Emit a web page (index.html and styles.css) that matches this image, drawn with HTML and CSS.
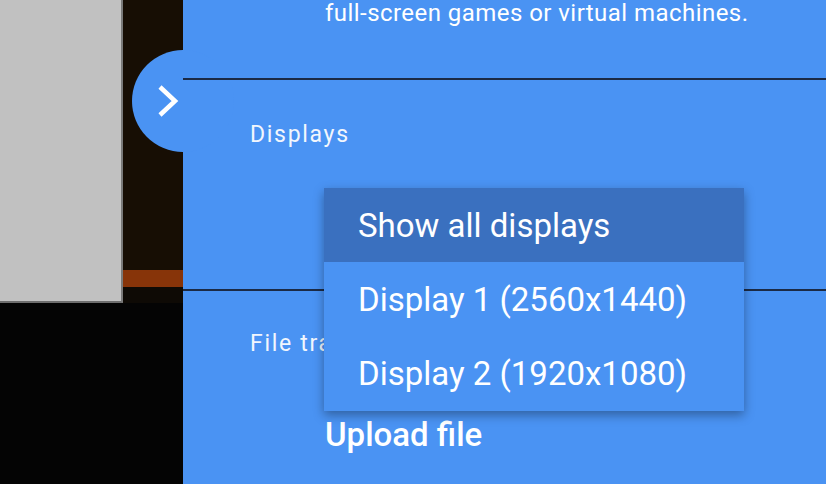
FILE: index.html
```html
<!DOCTYPE html>
<html>
<head>
<meta charset="utf-8">
<link rel="stylesheet" href="styles.css">
</head>
<body>
<div class="desktop">
  <div class="desk-top">
    <div class="window"></div>
    <div class="strip">
      <div class="strip-dark"></div>
      <div class="strip-orange"></div>
      <div class="strip-bottom"></div>
    </div>
  </div>
</div>
<div class="panel">
  <button class="toggle" aria-label="Close">
    <svg width="30" height="40" viewBox="0 0 30 40"><polyline points="4,5 19,19 4,33" fill="none" stroke="#fff" stroke-width="4.5"/></svg>
  </button>
  <div class="desc">full-screen games or virtual machines.</div>
  <div class="divider"></div>
  <div class="section section-displays">
    <div class="label">Displays</div>
  </div>
  <div class="divider"></div>
  <div class="section section-files">
    <div class="label">File transfer</div>
    <div class="action">Upload file</div>
  </div>
  <div class="menu">
    <div class="item selected">Show all displays</div>
    <div class="item">Display 1 (2560x1440)</div>
    <div class="item last">Display 2 (1920x1080)</div>
  </div>
</div>
</body>
</html>
```
FILE: styles.css
```css
html, body {
  margin: 0;
  padding: 0;
  width: 826px;
  height: 484px;
  overflow: hidden;
  background: #030303;
}
body {
  display: flex;
  font-family: Roboto, "Liberation Sans", sans-serif;
}
.desktop {
  width: 183px;
  flex: none;
  background: #040404;
}
.desk-top {
  display: flex;
  height: 303px;
}
.window {
  width: 123px;
  background: #c1c1c1;
  border-right: 2px solid #7a7a7a;
  border-bottom: 2px solid #6e6e6e;
  box-sizing: border-box;
  height: 303px;
}
.strip {
  flex: 1;
  display: flex;
  flex-direction: column;
}
.strip-dark {
  height: 270px;
  background: #170e04;
}
.strip-orange {
  height: 17px;
  background: #873409;
}
.strip-bottom {
  flex: 1;
  background: #0e0a05;
}
.panel {
  position: relative;
  flex: 1;
  background: #4a93f3;
  color: #fff;
}
.toggle {
  position: absolute;
  left: -51px;
  top: 50px;
  width: 102px;
  height: 102px;
  border-radius: 50%;
  border: 0;
  padding: 0 0 0 24px;
  background: #4a93f3;
  display: flex;
  align-items: center;
  justify-content: flex-start;
}
.toggle svg {
  display: block;
  margin-top: 2px;
}
.desc {
  height: 79px;
  padding-left: 142px;
  font-size: 24px;
  line-height: 28px;
  margin-top: -1px;
  letter-spacing: 0.45px;
  position: relative;
  z-index: 1;
  white-space: nowrap;
}
.divider {
  height: 2px;
  background: #1b2a45;
  position: relative;
  z-index: 1;
}
.section {
  padding-left: 67px;
  position: relative;
  z-index: 1;
}
.section-displays {
  height: 209px;
  box-sizing: border-box;
  padding-top: 40px;
}
.section-files {
  padding-top: 38px;
}
.label {
  font-size: 23px;
  line-height: 30px;
  letter-spacing: 1.7px;
  color: #f2f6fd;
}
.action {
  margin-top: 56px;
  margin-left: 75px;
  font-size: 33px;
  font-weight: 500;
  line-height: 40px;
}
.menu {
  position: absolute;
  left: 141px;
  top: 188px;
  width: 420px;
  background: #4a93f3;
  box-shadow: 0 4px 10px rgba(0, 0, 0, 0.35);
  z-index: 2;
}
.item {
  height: 74px;
  display: flex;
  align-items: center;
  padding-left: 34px;
  font-size: 33px;
}
.item.selected {
  background: #3a70bf;
}
.item.last {
  height: 75px;
}
```
